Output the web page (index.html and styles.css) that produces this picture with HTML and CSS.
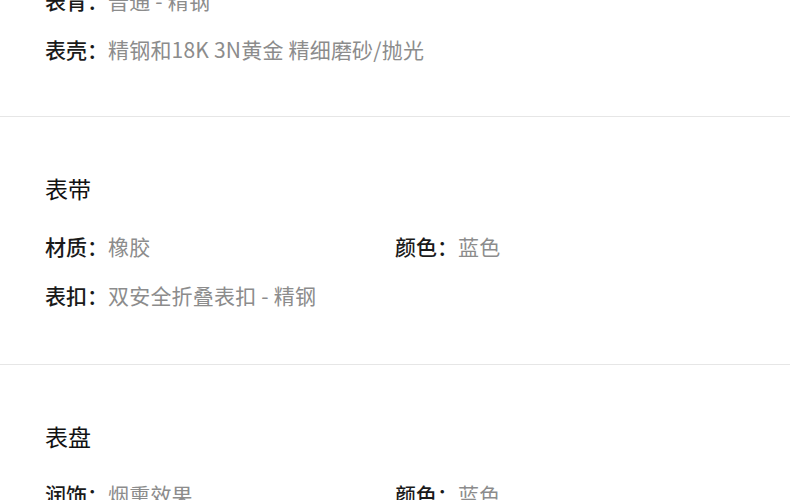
FILE: index.html
```html
<!DOCTYPE html>
<html lang="zh-CN">
<head>
    <meta charset="UTF-8">
    <meta name="viewport" content="width=device-width, initial-scale=1.0">
    <title>腕表参数</title>
    <link rel="stylesheet" href="styles.css">
</head>
<body>
    <div class="page">
        <!-- 表壳 (scrolled, title above the fold) -->
        <div class="section section-cut">
            <div class="specs">
                <div class="spec spec-wide"><span class="label">表背：</span><span class="value">普通 - 精钢</span></div>
                <div class="spec spec-wide"><span class="label">表壳：</span><span class="value">精钢和18K 3N黄金 精细磨砂/抛光</span></div>
            </div>
        </div>
        <div class="section">
            <h2 class="section-title">表带</h2>
            <div class="specs">
                <div class="spec"><span class="label">材质：</span><span class="value">橡胶</span></div>
                <div class="spec"><span class="label">颜色：</span><span class="value">蓝色</span></div>
                <div class="spec spec-wide"><span class="label">表扣：</span><span class="value">双安全折叠表扣 - 精钢</span></div>
            </div>
        </div>
        <div class="section">
            <h2 class="section-title">表盘</h2>
            <div class="specs">
                <div class="spec"><span class="label">润饰：</span><span class="value">烟熏效果</span></div>
                <div class="spec"><span class="label">颜色：</span><span class="value">蓝色</span></div>
            </div>
        </div>
    </div>
</body>
</html>
```
FILE: styles.css
```css
body {
    margin: 0;
    padding: 0;
    background-color: #fff;
    color: #111;
    font-family: "Noto Sans CJK SC", "Noto Sans", sans-serif;
}
.page {
    overflow: hidden;
}
.section {
    padding: 55px 45px 44px;
    border-bottom: 1px solid #e6e6e6;
}
.section-cut {
    padding-top: 0;
    padding-bottom: 42px;
    margin-top: -24px;
}
.section-title {
    margin: 0 0 18px;
    font-size: 23px;
    line-height: 32px;
    font-weight: 400;
    color: #111;
}
.specs {
    display: grid;
    grid-template-columns: 1fr 1fr;
}
.spec {
    font-size: 21px;
    line-height: 49px;
    white-space: nowrap;
}
.spec-wide {
    grid-column: 1 / -1;
}
.label {
    font-weight: 500;
    color: #1a1a1a;
}
.value {
    color: #8c8c8c;
    font-weight: 400;
    letter-spacing: 0.2px;
}
```
